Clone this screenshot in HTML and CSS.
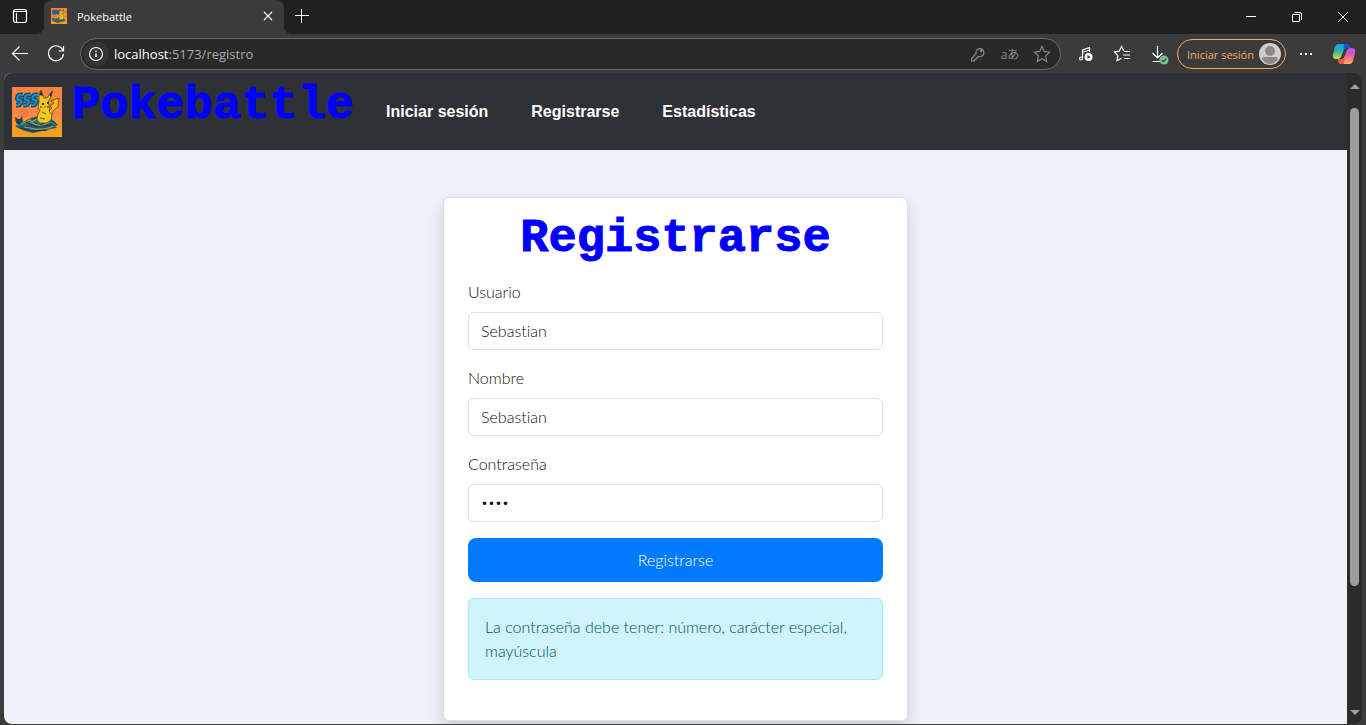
FILE: index.html
```html
<!DOCTYPE html>
<html lang="es">
<head>
<meta charset="utf-8">
<title>Pokebattle</title>
<link rel="stylesheet" href="styles.css">
</head>
<body>
<svg class="defs" aria-hidden="true">
  <symbol id="logo" viewBox="0 0 50 50">
    <defs>
      <linearGradient id="sky" x2="0" y2="1"><stop offset="0" stop-color="#fb813f"/><stop offset=".6" stop-color="#fa8944"/><stop offset=".68" stop-color="#f79a27"/><stop offset="1" stop-color="#f4a01d"/></linearGradient>
      <path id="bolts" d="M11 8H9q-3 0-3.500 2.500T7.500 13t1.500 2.500T6 18H4M18.500 8h-2q-3 0-3.500 2.500t2 2.500 1.500 2.500-3 2.500h-2M26 8h-2q-3 0-3.500 2.500t2 2.500 1.500 2.500-3 2.500h-2"/>
    </defs>
    <path fill="url(#sky)" d="M0 0h50v50H0z"/>
    <g stroke="#f9a33c" fill="none"><path d="M27 1l2 6M45 5l-4 5M49 25l-7-3M48 31l-6-3M24 26l-4 3"/></g>
    <g fill="none" stroke-linejoin="round">
      <use href="#bolts" stroke="#a5823a" stroke-width="5.500"/>
      <use href="#bolts" stroke="#123f66" stroke-width="4.500"/>
      <use href="#bolts" stroke="#168bc8" stroke-width="2.500"/>
    </g>
    <g fill="none" stroke="#cf6539" stroke-width=".8"><circle cx="12" cy="26" r="3.500"/><path d="M10 24l4 4M14 24l-4 4"/></g>
    <path d="M3 39l8-4 8-4 7-2 10 1 6 4 4 4-3 1 2 2-7 1-4 2-4 0-9 2-8-2-7-3z" fill="#24566a"/>
    <path d="M3 30l3 2h2l2-3 1 6-4 3-3-2z" fill="#1e4057"/>
    <g fill="none" stroke-width="1.200"><path stroke="#1685b4" d="M5 39c7-1 9-3 14-2M22 33c4 2 5 5 12 4M18 42c6 2 12 0 19-1M37 34l6 4"/><path stroke="#b89a35" d="M9 37l9-4 4 4 8 2 8-4M12 40l12 2 9 0 9-3M18 36l7-4 9 4"/><path stroke="#163b50" d="M8 41l13 3 12-1M14 35l10 5 14-2"/></g>
    <path d="M36 25l4-4-2-2 4-3-3-2 8-3-1 9-5 4-2 5-5 2z" fill="#f6bd17" stroke="#54431d" stroke-width=".8"/>
    <path d="M27 15L27 6l2-3 3 8h3l5-7-1 6-3 5 2 6-1 3 3 4-1 5-4 3h-7l-3-3 1-6 2-3-2-4z" fill="#f9c816" stroke="#51451f" stroke-width=".8"/>
    <path d="M27 8l2-5 2 6zM37 8l4-4-2 6zM30 16h2v2h-2zM35 15h2v2h-2z" fill="#173b51"/><path d="M28 19h2v2h-2zM35 19h2v2h-2z" fill="#db5823"/><path d="M32 20h2M30 25l4 2M28 31l5 1" stroke="#37626a"/>
  </symbol>
</svg>
<div class="browser">
  <header class="titlebar">
    <button class="workspace" aria-label="Pestañas"><svg width="16" height="16" viewBox="0 0 16 16"><rect x="1.500" y="1.500" width="13" height="13" rx="2.500"/><path d="M2 3.500h12M4.500 5v9"/></svg></button>
    <div class="tab"><svg class="favicon" width="16" height="16"><use href="#logo"/></svg><span>Pokebattle</span><button aria-label="Cerrar pestaña"><svg width="10" height="10" viewBox="0 0 10 10"><path d="M1 1l8 8M9 1L1 9"/></svg></button></div>
    <button class="newtab" aria-label="Nueva pestaña"><svg width="14" height="14" viewBox="0 0 14 14"><path d="M6.500 0v14M0 6.500h14"/></svg></button>
    <div class="winbuttons">
      <button aria-label="Minimizar"><svg width="10" height="10" viewBox="0 0 10 10"><path d="M0 4.500h10"/></svg></button>
      <button aria-label="Restaurar"><svg width="10" height="10" viewBox="0 0 10 10"><path d="M.5 2.500h7v7h-7zM2.500 .5h5.500q1.500 0 1.500 1.500v6"/></svg></button>
      <button aria-label="Cerrar"><svg width="10" height="10" viewBox="0 0 10 10"><path d="M0 0l10 10M10 0L0 10"/></svg></button>
    </div>
  </header>
  <div class="toolbar">
    <button class="nav" aria-label="Atrás"><svg width="18" height="18" viewBox="0 0 18 18"><path d="M1.500 8.500H17M8.500 1.500l-7 7 7 7"/></svg></button>
    <button class="nav" aria-label="Actualizar"><svg width="18" height="18" viewBox="0 0 18 18"><path d="M16 5.500A7.500 7.500 0 1 0 16.500 9M16.500 1v5h-5"/></svg></button>
    <div class="address">
      <button class="info" aria-label="Información del sitio"><svg width="16" height="16" viewBox="0 0 16 16"><circle cx="8" cy="8" r="6.500"/><path d="M8 7.200V11M8 4.700v1.200" stroke-width="1.500"/></svg></button>
      <span class="url"><b>localhost</b>:5173/registro</span>
      <div class="tools">
        <button aria-label="Contraseñas"><svg width="16" height="16" viewBox="0 0 16 16"><path d="M6 7.500a4 4 0 1 1 3 3L7.500 11v1H6v1.500H4.500V15H1.500v-2.500z"/><circle cx="11" cy="5" r=".7"/></svg></button>
        <button class="translate" aria-label="Traducir">aあ</button>
        <button aria-label="Favorito"><svg width="18" height="18" viewBox="0 0 18 18"><path d="M9 1.500l2.300 4.900 5.200.7-3.800 3.800.9 5.600L9 13.800l-4.600 2.700.9-5.600L1.500 7.100l5.200-.7z"/></svg></button>
      </div>
    </div>
    <div class="actions">
      <button aria-label="Multimedia"><svg width="16" height="16" viewBox="0 0 16 16"><path d="M4.500 12V4l7-2.500V6M4.500 6.500l7-2.500"/><circle cx="3" cy="12.500" r="1.500"/><circle cx="10.500" cy="11" r="4" fill="#fff" stroke="none"/><path d="M9.500 9l3 2-3 2z" fill="#333" stroke="none"/></svg></button>
      <button aria-label="Favoritos"><svg width="18" height="18" viewBox="0 0 18 18"><path d="M11 6L8.500 1.500 6.200 6.200 1.500 7l3.300 3.600-.8 5 4.500-2.400M11 6.500h6M10 10h7M11 13.500h6"/></svg></button>
      <button aria-label="Descargas"><svg width="22" height="22" viewBox="0 0 22 22"><path d="M10.500 3v12M5.500 10l5 5 5-5M5.500 18.500h8"/><circle cx="17" cy="17" r="4.500" fill="#79c58d" stroke="none"/><path d="M14.700 17l1.700 1.700 3-3" stroke="#244832"/></svg></button>
      <button class="signin">Iniciar sesión<svg width="22" height="22" viewBox="0 0 22 22"><circle cx="11" cy="11" r="11" fill="#d1cfcd"/><circle cx="11" cy="8" r="5" fill="#8c8885"/><path d="M3 16q0-2 2-2h12q2 0 2 2-3 5-8 5t-8-5" fill="#8c8885"/></svg></button>
      <button aria-label="Más"><svg width="14" height="4" viewBox="0 0 14 4"><path d="M1 1h2v2H1zM6 1h2v2H6zM11 1h2v2h-2z" fill="#fff" stroke="none"/></svg></button>
      <button aria-label="Copilot"><svg width="24" height="22" viewBox="0 0 24 22"><defs><linearGradient id="c1" x2="0" y2="1"><stop stop-color="#159cf0"/><stop offset=".5" stop-color="#27b9b5"/><stop offset="1" stop-color="#f2d22f"/></linearGradient><linearGradient id="c2" x2="0" y2="1"><stop stop-color="#a65cf0"/><stop offset=".5" stop-color="#ed5b9b"/><stop offset="1" stop-color="#ffb154"/></linearGradient></defs><g stroke="none"><path d="M6 1h9q2 0 3 4H14q-2 0-3 4l-2 5q-1 2-3 2H4q-4 0-3-5L3 4q1-3 3-3" fill="url(#c1)"/><path d="M12 1h3q2 0 3 4h-4q-2 0-2.500 2z" fill="#1855cb"/><path d="M18 21H9q-2 0-3-5h4q2 0 3-4l2-5q1-2 3-2h2q4 0 3 5l-2 8q-1 3-3 3" fill="url(#c2)"/><path d="M12 21H9q-2 0-3-5h4q2 0 3-3z" fill="#f15a48"/></g></svg></button>
    </div>
  </div>
  <div class="viewport">
    <div class="page">
      <nav class="navbar">
        <svg class="logo" width="50" height="50" role="img" aria-label="Pokebattle"><use href="#logo"/></svg>
        <span class="brand pixel">Pokebattle</span>
        <a href="#">Iniciar sesión</a><a href="#">Registrarse</a><a href="#">Estadísticas</a>
      </nav>
      <main>
        <form class="card">
          <h1 class="pixel">Registrarse</h1>
          <label for="usuario">Usuario</label><input id="usuario" type="text" value="Sebastian">
          <label for="nombre">Nombre</label><input id="nombre" type="text" value="Sebastian">
          <label for="clave">Contraseña</label><input id="clave" type="password" value="1234">
          <button class="submit" type="button">Registrarse</button>
          <div class="alert" role="alert">La contraseña debe tener: número, carácter especial, mayúscula</div>
        </form>
      </main>
    </div>
    <div class="scrollbar"><span class="arrow up"></span><span class="thumb"></span><span class="arrow down"></span></div>
  </div>
</div>
</body>
</html>
```
FILE: styles.css
```css
* { box-sizing: border-box; }
body { margin: 0; font-family: Lato, "Open Sans", sans-serif; }
button { font: inherit; border: 0; padding: 0; background: none; color: inherit; display: flex; align-items: center; justify-content: center; }
.defs { position: absolute; width: 0; height: 0; }
.browser { height: 100vh; display: flex; flex-direction: column; background: #3b3b3b; color: #fff; overflow: hidden; }
.browser button svg { fill: none; stroke: currentColor; stroke-width: 1.2; }

.titlebar { height: 34px; flex: none; display: flex; background: #202020; }
.workspace { width: 40px; height: 32px; margin-right: 4px; }
.tab { position: relative; width: 240px; display: flex; align-items: center; gap: 10px; padding: 0 11px 2px 7px; background: #3b3b3b; border-radius: 8px 8px 0 0; font-family: "Open Sans", sans-serif; font-size: 11px; }
.tab::before, .tab::after { content: ""; position: absolute; bottom: 0; width: 8px; height: 8px; }
.tab::before { right: 100%; background: radial-gradient(circle at 0 0, #202020 8px, #3b3b3b 8px); }
.tab::after { left: 100%; background: radial-gradient(circle at 100% 0, #202020 8px, #3b3b3b 8px); }
.tab button { margin-left: auto; }
.newtab { width: 36px; height: 32px; }
.winbuttons { display: flex; margin-left: auto; }
.winbuttons button { width: 46px; height: 33px; }
.browser .winbuttons svg, .browser .newtab svg { stroke-width: 1; }

.toolbar { height: 39px; flex: none; display: flex; align-items: center; padding: 1px 4px 0 2px; }
.nav { width: 36px; height: 32px; }
.address { flex: 1; height: 32px; margin: 0 7px 0 6px; display: flex; align-items: center; border: 1px solid #6a6a6a; border-radius: 16px; background: #292929; }
.info { width: 26px; height: 26px; margin: 0 5px 0 2px; border-radius: 50%; background: #333; }
.url { font-family: "Open Sans", sans-serif; font-size: 13px; color: #aaa; }
.url b { font-weight: 400; color: #fff; }
.tools { display: flex; margin-left: auto; margin-right: 2px; color: #888; }
.tools button { width: 32px; }
.translate { font-family: "Open Sans", "Noto Sans CJK JP", sans-serif; font-size: 12px; }
.actions { display: flex; align-items: center; }
.actions button { width: 36px; height: 30px; }
.actions .signin { width: 109px; margin: 0 2px 0 1px; padding-left: 5px; gap: 5px; border: 1px solid #f8a968; border-radius: 15px; color: #f8a968; font-family: "Open Sans", sans-serif; font-size: 11px; white-space: nowrap; }
.signin svg { flex: none; }
.signin svg * { stroke: none; }
.signin + button { margin-right: 2px; }

.viewport { flex: 1; min-height: 0; margin: 0 4px 1px; display: flex; border-radius: 8px; overflow: hidden; background: #2b2b2b; }
.page { flex: 1; overflow: hidden; background: #edf2fa; }
.navbar { height: 77px; display: flex; align-items: center; padding: 0 8px; background: #2e3136; }
.logo { flex: none; }
.pixel { font-family: "Liberation Mono", monospace; font-size: 47px; line-height: 34px; font-weight: 700; color: #00f; -webkit-text-stroke: 1px #00f; }
.brand { margin: 0 32px 12px 10px; }
.navbar a { font: 700 16px/24px "Liberation Sans", Arial, sans-serif; color: #fff; text-decoration: none; margin-right: 43px; }
main { padding: 47px 16px; }
.card { max-width: 465px; margin: 0 auto; padding: 24px; background: #fff; border: 1px solid #dcdfe5; border-radius: 6px; box-shadow: 0 8px 16px rgba(0, 0, 0, .15); color: #111; font-size: 16px; line-height: 24px; font-weight: 300; font-variant-ligatures: none; }
.card h1 { margin: 0 0 24px; text-align: center; }
.card label { display: block; margin-bottom: 8px; }
.card input { display: block; width: 100%; height: 38px; margin: 0 0 16px; padding: 5px 12px 7px; border: 1px solid #dee2e6; border-radius: 6px; background: #fff; color: #111; font: inherit; font-variant-ligatures: none; }
.card input[type="password"] { font-size: 12px; }
.submit { width: 100%; height: 44px; border-radius: 8px; background: #007bff; color: #fff; }
.alert { margin: 16px 0; padding: 16px; border: 1px solid #9eeaf9; border-radius: 6px; background: #cff4fc; color: #055160; }
.scrollbar { width: 15px; display: flex; flex-direction: column; align-items: center; padding: 11px 0 9px; }
.thumb { width: 9px; flex: 0 1 478px; margin: 19px 0 auto; border-radius: 5px; background: #9d9d9d; }
.arrow { flex: none; border: 5px solid transparent; border-top: 0; border-bottom: 5px solid #9d9d9d; }
.arrow.down { border-top: 5px solid #9d9d9d; border-bottom: 0; }
```
